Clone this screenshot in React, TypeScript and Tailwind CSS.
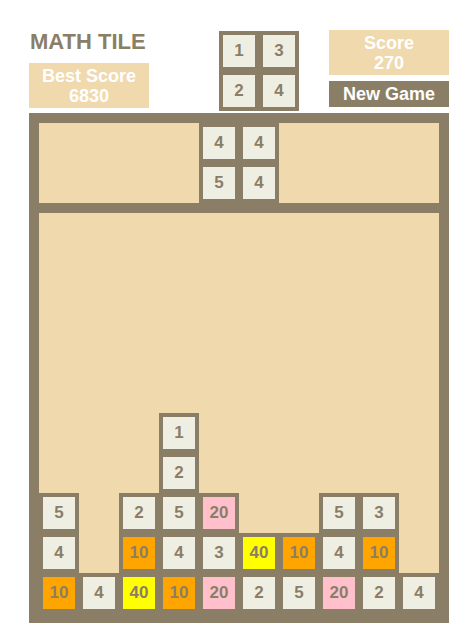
const FONT = { fontFamily: '"Liberation Sans", Arial, Helvetica, sans-serif' }

type Cell = number | null
const _ = null

const PREVIEW: Cell[][] = [
  [1, 3],
  [2, 4],
]

// falling piece sits in columns 4-5 of the top strip
const TOP: Cell[][] = [
  [_, _, _, _, 4, 4, _, _, _, _],
  [_, _, _, _, 5, 4, _, _, _, _],
]

const BOARD: Cell[][] = [
  [_, _, _, _, _, _, _, _, _, _],
  [_, _, _, _, _, _, _, _, _, _],
  [_, _, _, _, _, _, _, _, _, _],
  [_, _, _, _, _, _, _, _, _, _],
  [_, _, _, _, _, _, _, _, _, _],
  [_, _, _, 1, _, _, _, _, _, _],
  [_, _, _, 2, _, _, _, _, _, _],
  [5, _, 2, 5, 20, _, _, 5, 3, _],
  [4, _, 10, 4, 3, 40, 10, 4, 10, _],
  [10, 4, 40, 10, 20, 2, 5, 20, 2, 4],
]

function tileColor(v: number) {
  if (v === 10) return 'bg-[#ffa500]'
  if (v === 20) return 'bg-[#ffc0cb]'
  if (v === 40) return 'bg-[#ffff00]'
  return 'bg-[#efeee2]'
}

function Tile({ value }: { value: Cell }) {
  if (value === null) return <div className="w-10 h-10" />
  return (
    <div className="w-10 h-10 p-1 bg-[#8b7e66]">
      <div className={`w-8 h-8 flex items-center justify-center text-[17px] font-bold text-[#8b7e66] ${tileColor(value)}`}>
        {value}
      </div>
    </div>
  )
}

function Grid({ rows }: { rows: Cell[][] }) {
  return (
    <div className="flex flex-col">
      {rows.map((r, i) => (
        <div key={i} className="flex">
          {r.map((v, j) => <Tile key={j} value={v} />)}
        </div>
      ))}
    </div>
  )
}

export default function App() {
  return (
    <div className="bg-white w-[476px] h-[642px] pt-[30px] pl-[29px]" style={FONT}>
      <div className="flex h-[83px]">
        <div className="w-[120px] flex flex-col">
          <h1 className="text-[22px] leading-[26px] font-bold text-[#8b7e66] pl-[1px] -mt-[1px]">MATH TILE</h1>
          <div className="mt-[8px] h-[45px] bg-[#efd9ad] flex flex-col items-center justify-center text-white font-bold text-[18px] leading-[20px]">
            <span>Best Score</span>
            <span>6830</span>
          </div>
        </div>
        <div className="ml-[70px] mt-[1px] w-20 h-20 bg-[#8b7e66]">
          <Grid rows={PREVIEW} />
        </div>
        <div className="ml-[30px] w-[120px] flex flex-col">
          <div className="h-[45px] bg-[#efd9ad] flex flex-col items-center justify-center text-white font-bold text-[18px] leading-[20px]">
            <span>Score</span>
            <span>270</span>
          </div>
          <button className="mt-[6px] h-[26px] bg-[#8b7e66] text-white font-bold text-[18px] leading-[20px]">
            New Game
          </button>
        </div>
      </div>

      <div className="w-[420px] bg-[#8b7e66] p-[10px]">
        <div className="bg-[#efd9ad]">
          <Grid rows={TOP} />
        </div>
        <div className="mt-[10px] bg-[#efd9ad]">
          <Grid rows={BOARD} />
        </div>
      </div>
    </div>
  )
}
